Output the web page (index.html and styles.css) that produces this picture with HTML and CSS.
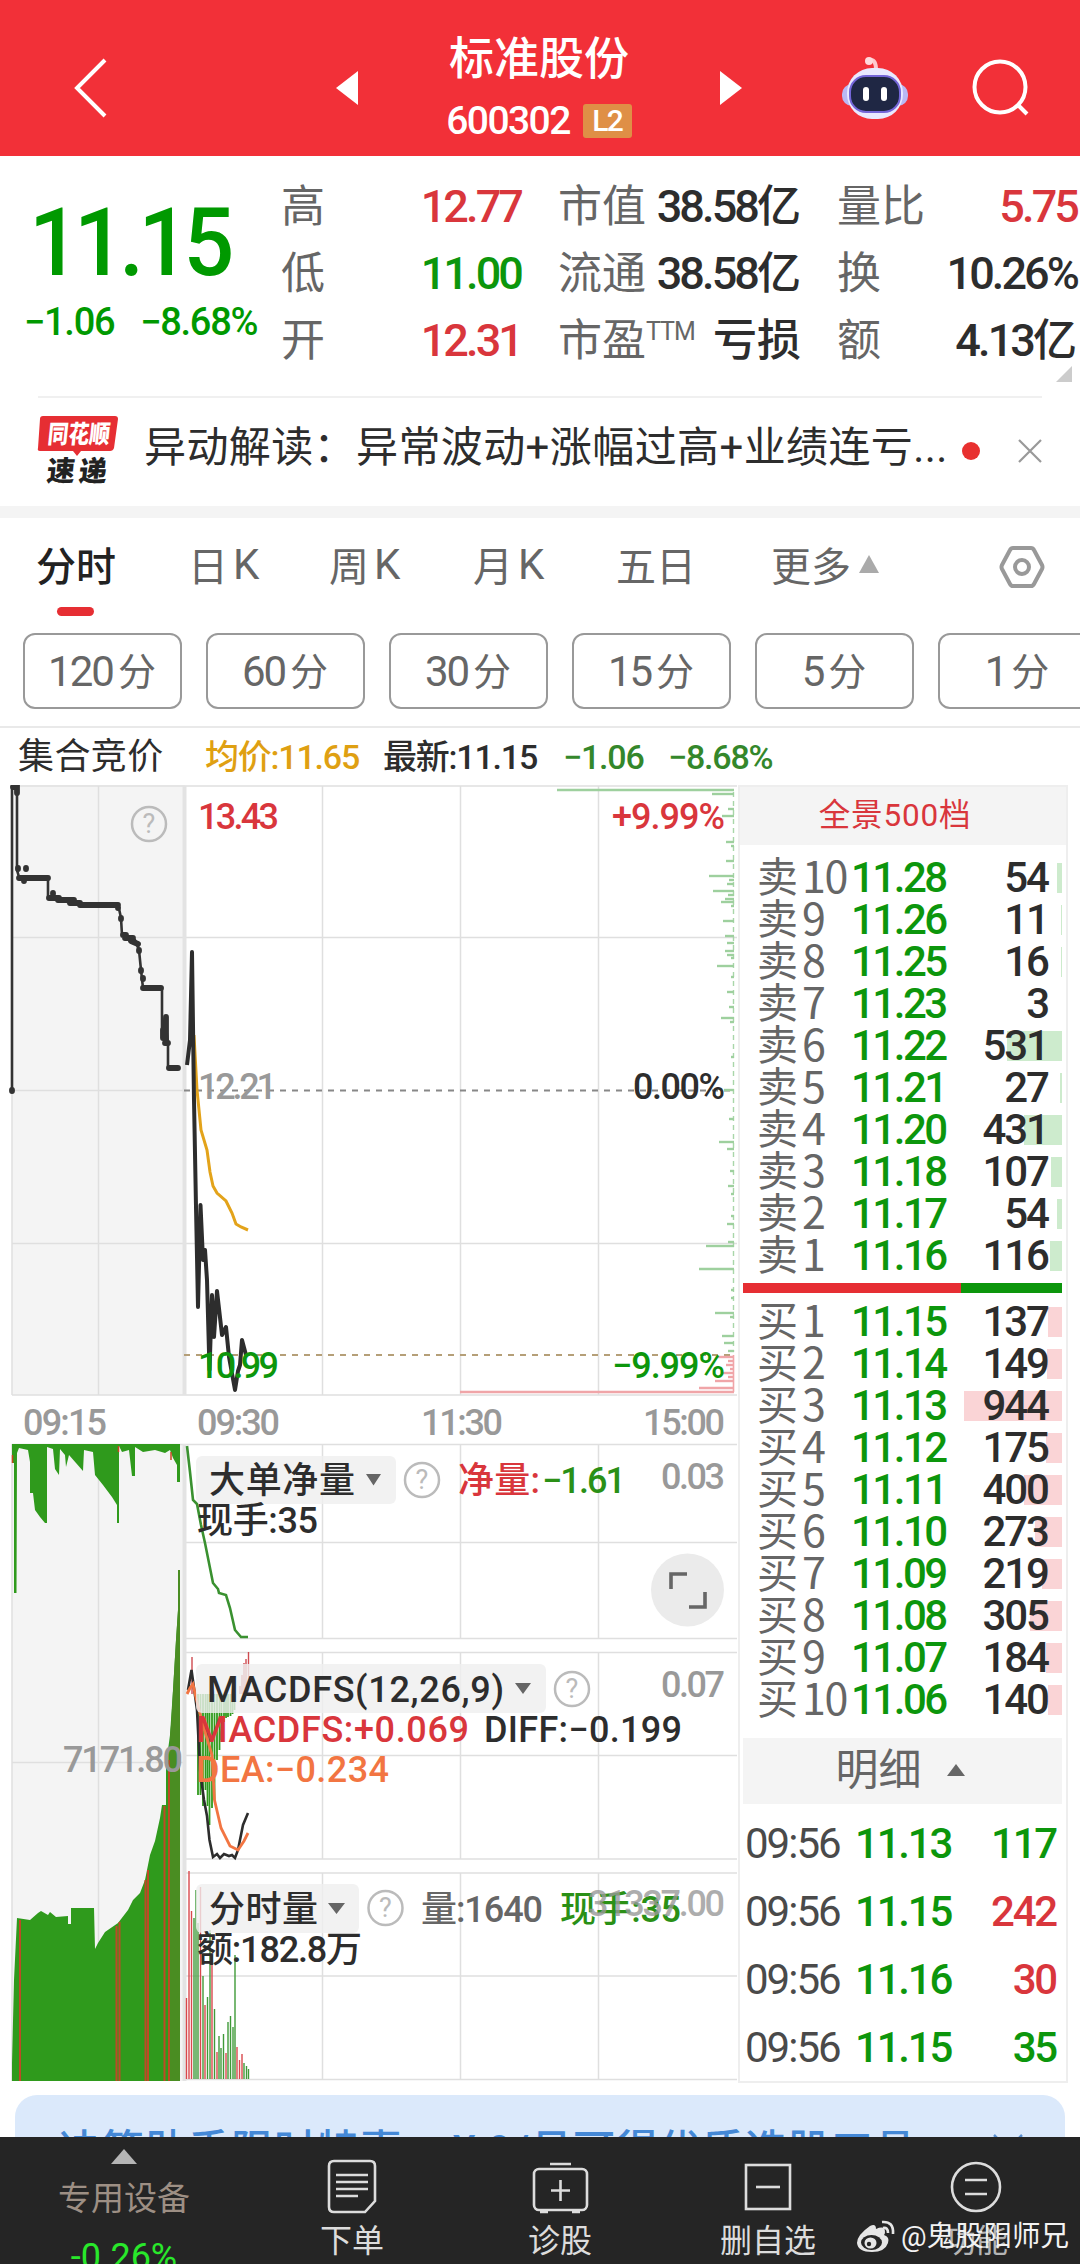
FILE: index.html
```html
<!DOCTYPE html>
<html lang="zh-CN">
<head>
    <meta charset="UTF-8">
    <meta name="viewport" content="width=device-width, initial-scale=1.0">
    <title>标准股份 600302</title>
    <link rel="stylesheet" href="styles.css">
</head>
<body>
    <header class="header">
        <svg class="icon-back" width="36" height="62" viewBox="0 0 36 62"><path d="M32 3 L4 31 L32 59"/></svg>
        <svg class="icon-prev" width="22" height="34" viewBox="0 0 22 34"><path d="M22 0 V34 L0 17Z"/></svg>
        <div class="stock">
            <div class="stock-name">标准股份</div>
            <div class="stock-code"><span>600302</span><span class="badge">L2</span></div>
        </div>
        <svg class="icon-next" width="22" height="34" viewBox="0 0 22 34"><path d="M0 0 V34 L22 17Z"/></svg>
        <svg class="icon-robot" width="70" height="64" viewBox="0 0 70 64">
            <path d="M30 4 Q36 3 36 14" fill="none" stroke="#ffc9cf" stroke-width="4"/>
            <circle cx="29" cy="5" r="4" fill="#ffd9dc"/>
            <rect x="2" y="28" width="66" height="22" rx="10" fill="#b9b8f5"/>
            <rect x="7" y="12" width="56" height="51" rx="25" fill="#e9e9ff"/>
            <rect x="10" y="20" width="50" height="36" rx="16" fill="#1f2744" stroke="#7466d8" stroke-width="2"/>
            <rect x="23" y="31" width="6" height="14" rx="3" fill="#fff"/>
            <rect x="41" y="31" width="6" height="14" rx="3" fill="#fff"/>
        </svg>
        <svg class="icon-search" width="60" height="60" viewBox="0 0 60 60"><circle cx="28" cy="29" r="25.5"/><path d="M46 47 L55 56"/></svg>
    </header>

    <section class="quote">
        <div class="price-box">
            <div class="price">11.15</div>
            <div class="change"><span>−1.06</span><span>−8.68%</span></div>
        </div>
        <div class="stat s1"><label>高</label><b class="red">12.77</b></div>
        <div class="stat s2"><label>市值</label><b>38.58<i>亿</i></b></div>
        <div class="stat s3"><label>量比</label><b class="red">5.75</b></div>
        <div class="stat s1"><label>低</label><b class="green">11.00</b></div>
        <div class="stat s2"><label>流通</label><b>38.58<i>亿</i></b></div>
        <div class="stat s3"><label>换</label><b>10.26%</b></div>
        <div class="stat s1"><label>开</label><b class="red">12.31</b></div>
        <div class="stat s2"><label>市盈<sup>TTM</sup></label><b><i>亏损</i></b></div>
        <div class="stat s3"><label>额</label><b>4.13<i>亿</i></b></div>
        <svg class="corner" width="16" height="16" viewBox="0 0 16 16"><path d="M16 0 V16 H0Z" fill="#ccc"/></svg>
    </section>

    <section class="notice">
        <svg class="logo" width="84" height="72" viewBox="0 0 84 72">
            <path d="M7 1 H79 Q82 1 82 4 L78 33 Q77 36 74 36 H45 L41 41 L37 36 H4 Q1 36 2 33 L4 4 Q4 1 7 1Z" fill="#e62e33"/>
            <text x="14" y="28" textLength="62" lengthAdjust="spacingAndGlyphs" transform="skewX(-6)" fill="#fff" font-size="25" font-weight="900">同花顺</text>
            <text x="17" y="66" textLength="60" transform="skewX(-6)" fill="#222" font-size="28" font-weight="900">速递</text>
        </svg>
        <div class="notice-text">异动解读：异常波动+涨幅过高+业绩连亏...</div>
        <span class="dot"></span>
        <svg width="24" height="24" viewBox="0 0 24 24"><path d="M1 1 L23 23 M23 1 L1 23" stroke="#999" stroke-width="2.2"/></svg>
    </section>

    <nav class="tabs">
        <span class="active">分时</span>
        <span>日<em>K</em></span>
        <span>周<em>K</em></span>
        <span>月<em>K</em></span>
        <span>五日</span>
        <span>更多<svg width="20" height="18" viewBox="0 0 20 18"><path d="M10 0 L20 18 H0Z" fill="#aaa"/></svg></span>
        <svg class="gear" width="46" height="44" viewBox="0 0 46 44">
            <path d="M14 3 H32 Q34 3 35 5 L43 20 Q44 22 43 24 L35 39 Q34 41 32 41 H14 Q12 41 11 39 L3 24 Q2 22 3 20 L11 5 Q12 3 14 3Z"/>
            <circle cx="23" cy="22" r="7"/>
        </svg>
    </nav>

    <div class="periods">
        <span>120<i>分</i></span><span>60<i>分</i></span><span>30<i>分</i></span><span>15<i>分</i></span><span>5<i>分</i></span><span class="last">1<i>分</i></span>
    </div>

    <div class="info">
        <span class="i-name">集合竞价</span>
        <span class="i-avg">均价:11.65</span>
        <span class="i-last">最新:11.15</span>
        <span class="i-chg">−1.06</span>
        <span class="i-pct">−8.68%</span>
    </div>

    <main class="main">
        <svg class="chart" width="738" height="1310" viewBox="0 785 738 1310">
            <!-- call auction background -->
            <rect x="12" y="785" width="173" height="610" fill="#f4f4f4"/>
            <rect x="12" y="1444" width="173" height="637" fill="#f4f4f4"/>

            <!-- grid -->
            <g class="grid">
                <path d="M12 786H737M12 937.5H737M12 1090.5H184M12 1243.5H737M12 1395H737"/>
                <path d="M12 786V1395M98.5 786V1395M322.5 786V1395M460.5 786V1395M598.5 786V1395"/>
                <path d="M12 1444.5H737M184 1542.5H737M184 1638.5H737M184 1652.5H737M184 1755.5H737M184 1859H737M184 1873H737M184 1976H737M184 2079.5H737M12 1762.5H184"/>
                <path d="M12 1444V2081M98.5 1444V2081"/>
                <path d="M322.5 1444V1638M460.5 1444V1638M598.5 1444V1638M322.5 1652V1859M460.5 1652V1859M598.5 1652V1859M322.5 1873V2079M460.5 1873V2079M598.5 1873V2079"/>
                <path class="thick" d="M184.5 786V1395M184.5 1444V2081"/>
            </g>
            <path d="M184 1090.5H734" stroke="#888" stroke-width="1.8" stroke-dasharray="6 6"/>
            <path d="M184 1355H734" stroke="#b59f78" stroke-width="2" stroke-dasharray="6 6"/>
            <path d="M733.5 792V1352" stroke="#a9d6a9" stroke-width="1.4" stroke-dasharray="5 4"/>
            <path d="M733.5 1355V1392" stroke="#f0a5a8" stroke-width="1.6"/>
            <g id="depth"></g>

            <!-- price -->
            <path class="auction-line" d="M12 1090V787H17V870L19 877H48V898H58L72 904H118L121 918L122 935L135 940L139 950L141 970L143 988H162V1038L165 1018L168 1043V1068H179"/>
            <path class="auction-dots" d="M13 787H17V793M18 868v1M26 868v1M19 878H48M24 880v1M49 898H59M53 893v1M58 900H74M70 903H80M80 905H118M118 907v1M121 918v1M123 935H126M125 938H133M131 941L138 944M139 950v1M141 970v1M143 978v1M143 988H161M166 1017V1042M163 1030V1038M165 1043H168M169 1068H178M12 1090v1"/>
            <path d="M194 1035L197 1090L201 1130L207 1150L210 1172L213 1186L217 1193L226 1201L232 1213L236 1224L241 1227L248 1230" fill="none" stroke="#e3a31a" stroke-width="3"/>
            <path d="M187 1065L190 1040L192 952L194 1100L196 1207L198 1307L200.500 1205L203 1260L205 1250L207 1280L209.500 1370L212 1295L214 1337L217 1291L222 1335L226 1327L229 1357L235 1390L238 1371L240 1365L242 1340L246 1355" fill="none" stroke="#2d2d2d" stroke-width="4" stroke-linejoin="round"/>

            <g class="help"><circle cx="149" cy="824" r="17"/><text x="149" y="833">?</text></g>
            <text class="t red" x="198" y="829" textLength="81">13.43</text>
            <text class="t red" x="612" y="829" textLength="113">+9.99%</text>
            <text class="t gray" x="198" y="1099" textLength="79">12.21</text>
            <text class="t dark" x="633" y="1099" textLength="92">0.00%</text>
            <text class="t green" x="198" y="1378" textLength="81">10.99</text>
            <text class="t green" x="612" y="1378" textLength="113">−9.99%</text>
            <text class="t gray" x="23" y="1435" textLength="84">09:15</text>
            <text class="t gray" x="197" y="1435" textLength="83">09:30</text>
            <text class="t gray" x="421" y="1435" textLength="82">11:30</text>
            <text class="t gray" x="643" y="1435" textLength="82">15:00</text>

            <!-- auction volume -->
            <path d="M12 1444V1463H14V1593H16.500L17 1453L19 1448L28 1450L30 1462V1493H33L35 1510L40 1517L45 1523H47V1447L53 1449L55 1469L59 1475L60 1449L65 1455L66 1467L69 1455L76 1463L83 1471L84 1450L93 1452L95 1475L103 1485L112 1497L117 1505V1523H119V1446L122 1452L129 1450L132 1476H135V1447L143 1452L155 1450L165 1453L170 1450L173 1458L177 1465V1482H180V1444Z" fill="#2f9a1c"/>
            <path d="M12.500 1455V1463M118.500 1446V1452M171 1452V1460" stroke="#c8451f" stroke-width="1.500"/>
            <path d="M12 2081V2063L14 1980L17 1918L30 1920L38 1913L41 1911L48 1915L50 1912L56 1917L68 1916V1924H71V1908H94L95 1949L98 1943L105 1932L118 1923L128 1910L133 1900L140 1893L145 1880L150 1855L155 1841L160 1818L162 1805H166V1765L170 1735L173 1690L176 1640L178 1610V1570H180V2081Z" fill="#2f9a1c"/>
            <path d="M171 1725L176 1640L178 1610V1570H180V2081H170V1735Z" fill="#4a8d22"/>
            <path d="M20 1920V2081M116.500 1926V2081M119.500 1922V2081M145.500 1880V2081M148 1870V2081M164.500 1806V2081M169 1760V2081" stroke="#bd4a26" stroke-width="2"/>
            <text class="t gray" x="63" y="1772" textLength="120">7171.80</text>

            <!-- net big orders -->
            <path d="M187 1446L190 1472L193 1500L197 1504L201 1525L205 1543L213 1583L218 1589L219 1593L226 1595L230 1608L235 1630L241 1637H248" fill="none" stroke="#3a9130" stroke-width="2.600"/>

            <!-- macd -->
            <g id="macd"></g>
            <path d="M188 1690L191.500 1670L194 1688L197 1710L200 1770L204 1800L207 1816L209.500 1840L213 1857L217 1854L220 1858L224 1854L229 1856L232 1855L235 1858L238 1850L243 1825L248 1813" fill="none" stroke="#2d2d2d" stroke-width="2.600"/>
            <path d="M187 1694L190 1688L193 1684L196 1698L203 1725L212 1755L214.500 1800L221 1828L230 1846L238 1850L244 1841L248 1833" fill="none" stroke="#f27542" stroke-width="2.800"/>

            <!-- minute volume -->
            <g id="volume"></g>

            <g class="chip">
                <rect x="196" y="1456" width="200" height="48" rx="6"/>
                <rect x="196" y="1664" width="350" height="49" rx="6"/>
                <rect x="196" y="1884" width="163" height="49" rx="6"/>
            </g>
            <path d="M366 1474H381L373.500 1485.500ZM515 1683H531L523 1694ZM328 1903H345L336.500 1914Z" fill="#666"/>

            <text class="t dark" x="209" y="1493" textLength="146">大单净量</text>
            <g class="help"><circle cx="422" cy="1480" r="17"/><text x="422" y="1489">?</text></g>
            <text class="t red" x="458" y="1493" textLength="82">净量:</text>
            <text class="t green2" x="542" y="1493" textLength="84">−1.61</text>
            <text class="t gray" x="661" y="1489" textLength="64">0.03</text>
            <text class="t dark" x="197" y="1533" textLength="121">现手:35</text>

            <text class="t dark" x="207" y="1702" textLength="297">MACDFS(12,26,9)</text>
            <g class="help"><circle cx="572" cy="1689" r="17"/><text x="572" y="1698">?</text></g>
            <text class="t gray" x="661" y="1697" textLength="64">0.07</text>
            <text class="t red" x="196" y="1742" textLength="273">MACDFS:+0.069</text>
            <text class="t dark" x="484" y="1742" textLength="198">DIFF:−0.199</text>
            <text class="t orange" x="196" y="1782" textLength="193">DEA:−0.234</text>

            <text class="t dark" x="209" y="1922" textLength="109">分时量</text>
            <g class="help"><circle cx="385.5" cy="1908" r="17"/><text x="385.5" y="1917">?</text></g>
            <text class="t mid" x="421" y="1922" textLength="122">量:1640</text>
            <text class="t green2" x="560" y="1922" textLength="121">现手:35</text>
            <text class="t gray faded" x="588" y="1916" textLength="137">31337.00</text>
            <text class="t dark" x="197" y="1962" textLength="165">额:182.8万</text>

            <circle cx="687.500" cy="1590" r="36.500" fill="#ebebeb"/>
            <path d="M671 1589V1574H687M705 1592V1607H689" fill="none" stroke="#666" stroke-width="3.600"/>
        </svg>

        <aside class="book">
            <div class="book-title">全景500档</div>
            <div class="orders" id="sell"></div>
            <div class="ratio"><span></span></div>
            <div class="orders" id="buy"></div>
            <div class="detail-title">明细<svg width="18" height="12" viewBox="0 0 18 12"><path d="M9 0 L18 12 H0Z" fill="#666"/></svg></div>
            <div class="trades">
                <div><span>09:56</span><b>11.13</b><b class="qty">117</b></div>
                <div><span>09:56</span><b>11.15</b><b class="qty red">242</b></div>
                <div><span>09:56</span><b>11.16</b><b class="qty red">30</b></div>
                <div><span>09:56</span><b>11.15</b><b class="qty">35</b></div>
            </div>
        </aside>
    </main>

    <div class="banner"><span>决策助手限时特惠，</span><span class="offer">¥ 9/月可得优质选股工具</span><svg width="30" height="30" viewBox="0 0 30 30"><path d="M1 1 L29 29 M29 1 L1 29" stroke="#5a8fd0" stroke-width="2.5"/></svg></div>

    <footer class="bottom">
        <div class="sector">
            <svg width="26" height="15" viewBox="0 0 26 15"><path d="M13 0 L26 15 H0Z" fill="#b5b5b5"/></svg>
            <span>专用设备</span>
            <b>-0.26%</b>
        </div>
        <div class="item">
            <svg width="60" height="60" viewBox="0 0 60 60"><path d="M12 4H48Q53 4 53 9V44L43 55H12Q7 55 7 50V9Q7 4 12 4ZM14 18H46M14 25H46M14 32H46M14 39H36"/></svg>
            <span>下单</span>
        </div>
        <div class="item">
            <svg width="60" height="60" viewBox="0 0 60 60"><rect x="4" y="12" width="53" height="41" rx="5"/><path d="M20 7H41M30.500 23V44M21 33.500H40M10 55H18M42 55H50"/></svg>
            <span>诊股</span>
        </div>
        <div class="item">
            <svg width="60" height="60" viewBox="0 0 60 60"><rect x="8" y="8" width="44" height="44"/><path d="M18 30H42"/></svg>
            <span>删自选</span>
        </div>
        <div class="item">
            <svg width="60" height="60" viewBox="0 0 60 60"><circle cx="30" cy="30" r="24"/><path d="M19 23H41M19 37H41"/></svg>
            <span class="dim">功能</span>
        </div>
        <div class="watermark">
            <svg width="40" height="34" viewBox="0 0 40 34">
                <path d="M14 6Q20 3 20 9Q29 5 29 12Q29 14 28 15Q34 17 32 23Q29 32 16 32Q2 32 1 23Q1 15 14 6Z" fill="#e6e6e6"/>
                <ellipse cx="15.500" cy="22.500" rx="10.500" ry="7.500" fill="#252525"/>
                <ellipse cx="14.500" cy="23" rx="6" ry="5.500" fill="#e6e6e6"/>
                <circle cx="13" cy="24" r="2.200" fill="#252525"/>
                <path d="M26 2Q38 1 37 14M27 8Q32 7 32 13" fill="none" stroke="#e6e6e6" stroke-width="2.600"/>
            </svg>
            <span>@鬼股阳师兄</span>
        </div>
    </footer>
    <script src="script.js"></script>
</body>
</html>
```
FILE: styles.css
```css
* {
    box-sizing: border-box;
}
body {
    margin: 0;
    width: 1080px;
    height: 2264px;
    overflow: hidden;
    background: #fff;
    color: #2d2d2d;
    font-family: Roboto, "Noto Sans CJK SC", sans-serif;
    display: flex;
    flex-direction: column;
}
i, em {
    font-style: normal;
}
svg {
    display: block;
    flex: none;
}
.red { color: #d9363c; fill: #d9363c; }
.green { color: #0c960c; fill: #0c960c; }

/* header */
.header {
    flex: none;
    height: 156px;
    background: #f23038;
    color: #fff;
    display: flex;
    align-items: center;
    padding: 20px 48px 0 73px;
}
.icon-back, .icon-search {
    fill: none;
    stroke: #fff;
    stroke-width: 4;
}
.icon-prev, .icon-next {
    fill: #fff;
}
.icon-prev {
    margin-left: 227px;
}
.stock {
    width: 363px;
    text-align: center;
}
.stock-name {
    font-size: 45px;
    line-height: 54px;
    font-weight: 500;
}
.stock-code {
    display: flex;
    justify-content: center;
    align-items: center;
    gap: 13px;
    font-size: 39px;
    font-weight: 500;
    line-height: 44px;
    letter-spacing: -1.6px;
    margin-top: 12px;
}
.badge {
    background: #df8f46;
    font-size: 30px;
    line-height: 34px;
    width: 49px;
    border-radius: 3px;
}
.icon-robot {
    margin-left: 98px;
}
.icon-search {
    margin-left: 62px;
}

/* quote */
.quote {
    flex: none;
    height: 240px;
    margin: 0 0 0 26px;
    padding-top: 17px;
    display: grid;
    grid-template-columns: 255px 277px 279px 243px;
    grid-auto-rows: 67px;
    position: relative;
}
.price-box {
    grid-row: span 3;
    color: #009900;
}
.price {
    font-size: 95px;
    font-weight: 500;
    line-height: 100px;
    letter-spacing: -6px;
    margin: 20px 0 0 3px;
    transform: scaleX(.94);
    transform-origin: left;
}
.change {
    display: flex;
    gap: 26px;
    font-size: 38px;
    font-weight: 500;
    line-height: 44px;
    letter-spacing: -1.3px;
    margin: 7px 0 0 -2px;
    white-space: nowrap;
}
.stat {
    display: flex;
    justify-content: space-between;
    align-items: center;
    line-height: 66px;
}
.stat label {
    font-size: 44px;
    color: #666;
}
.stat b {
    font-size: 45px;
    font-weight: 500;
    letter-spacing: -2.9px;
    white-space: nowrap;
}
.stat b i {
    font-size: 44px;
    letter-spacing: 0;
    font-weight: 500;
}
.s1 { padding-right: 37px; }
.s2 { padding-right: 36px; }
.s3 { padding-right: 3px; }
.stat sup {
    font-size: 25px;
    line-height: 0;
    vertical-align: 16px;
    letter-spacing: -1px;
}
.corner {
    position: absolute;
    right: 8px;
    bottom: 14px;
}

/* notice */
.notice {
    flex: none;
    height: 110px;
    margin: 0 38px;
    padding-bottom: 2px;
    border-top: 2px solid #f0f0f0;
    display: flex;
    align-items: center;
}
.logo {
    margin: 0 24px 0 -2px;
}
.notice-text {
    font-size: 42px;
    line-height: 60px;
    white-space: nowrap;
    letter-spacing: 0.4px;
    width: 820px;
    margin-top: -6px;
}
.dot {
    width: 18px;
    height: 18px;
    border-radius: 50%;
    background: #e8302f;
    margin-right: 38px;
}

/* tabs */
.tabs {
    flex: none;
    height: 127px;
    border-top: 12px solid #f4f4f4;
    padding: 0 34px 17px 36px;
    display: grid;
    grid-template-columns: 152px 141px 144px 143px 155px 228px 46px;
    align-items: center;
    font-size: 40px;
    color: #666;
}
.tabs span {
    display: flex;
    align-items: center;
    gap: 8px;
    margin-top: -6px;
}
.tabs em {
    margin-left: -3px;
    font-size: 42px;
}
.tabs .active {
    color: #222;
    font-weight: 500;
    position: relative;
}
.tabs .active:after {
    content: "";
    position: absolute;
    left: 21px;
    bottom: -23px;
    width: 37px;
    height: 9px;
    border-radius: 5px;
    background: #e62e33;
}
.gear {
    fill: none;
    stroke: #999;
    stroke-width: 4;
}

/* periods */
.periods {
    flex: none;
    height: 95px;
    border-bottom: 2px solid #e9e9e9;
    padding-left: 23px;
    display: flex;
    gap: 24px;
}
.periods span {
    flex: none;
    width: 159px;
    height: 76px;
    border: 2px solid #999;
    border-radius: 12px;
    color: #666;
    font-size: 42px;
    letter-spacing: -2px;
    display: flex;
    align-items: center;
    justify-content: center;
    gap: 5px;
    padding-right: 3px;
}
.periods i {
    font-size: 38px;
    margin-top: -5px;
}

/* info line */
.info {
    flex: none;
    height: 57px;
    padding-left: 18px;
    display: grid;
    grid-template-columns: 187px 178px 180px 105px auto;
    align-items: center;
    font-size: 34px;
    font-weight: 500;
    line-height: 58px;
    letter-spacing: -1.2px;
    white-space: nowrap;
}
.i-name {
    font-size: 36px;
    letter-spacing: 0.4px;
    font-weight: 400;
}
.i-avg { color: #dfa012; }
.i-chg, .i-pct { color: #34872b; }

/* charts */
.main {
    flex: none;
    height: 1310px;
    display: flex;
    align-items: flex-start;
}
.grid path {
    fill: none;
    stroke: #dfdfdf;
    stroke-width: 1.5;
}
.grid .thick {
    stroke: #e3e3e3;
    stroke-width: 4;
}
.auction-line {
    fill: none;
    stroke: #333;
    stroke-width: 2.6;
}
.auction-dots {
    fill: none;
    stroke: #333;
    stroke-width: 5.8;
    stroke-linecap: round;
}
.t {
    font-size: 36px;
    font-weight: 500;
}
.t.gray { fill: #999; }
.t.mid { fill: #666; }
.t.dark { fill: #2d2d2d; }
.t.green2 { fill: #2a9016; }
.t.orange { fill: #f27542; }
.t.faded { opacity: .8; }
.help circle {
    fill: none;
    stroke: #bbb;
    stroke-width: 2.5;
}
.help text {
    fill: #bbb;
    font-size: 27px;
    text-anchor: middle;
}
.chip {
    fill: #efefef;
    fill-opacity: .8;
}

/* order book */
.book {
    width: 330px;
    height: 1298px;
    border: 2px solid #eee;
    display: flex;
    flex-direction: column;
}
.book-title {
    height: 59px;
    background: #f4f4f4;
    color: #d9363c;
    font-size: 31.5px;
    line-height: 57px;
    letter-spacing: 0.8px;
    text-align: center;
    padding-right: 16px;
}
.orders {
    margin: 12px 4px 0 3px;
    display: flex;
    flex-direction: column;
}
.order {
    position: relative;
    height: 42px;
    padding: 0 14px 0 14px;
    display: grid;
    grid-template-columns: 45px 49px 120px 1fr;
    align-items: center;
    font-size: 42px;
    line-height: 42px;
}
.order label {
    font-size: 41px;
    color: #666;
}
.order .level {
    color: #666;
    font-family: "Noto Sans CJK SC", sans-serif;
    font-size: 43px;
    letter-spacing: -1.4px;
    margin-top: -7px;
}
.order b {
    position: relative;
    font-weight: 500;
    color: #0c960c;
    letter-spacing: -2.5px;
}
.order .qty {
    color: #2d2d2d;
    text-align: right;
    letter-spacing: -2px;
}
.order .bar {
    position: absolute;
    right: 0;
    top: 6px;
    height: 30px;
    background: #cdebcd;
}
#buy .bar {
    background: #fad4d6;
}
.ratio {
    margin: 6px 4px 0 3px;
    height: 10px;
    background: #0c960c;
}
.ratio span {
    display: block;
    width: 218px;
    height: 10px;
    background: #e62e33;
}
#buy {
    margin-top: 8px;
}
.detail-title {
    margin: 17px 4px 0 3px;
    height: 68px;
    background: #f4f4f4;
    color: #666;
    font-size: 43px;
    line-height: 64px;
    display: flex;
    align-items: center;
    justify-content: center;
    gap: 25px;
    padding: 0 5px 2px 0;
}
.trades {
    padding: 5px 10px 0 5px;
}
.trades div {
    height: 68px;
    display: grid;
    grid-template-columns: 110px 110px 1fr;
    align-items: center;
    font-size: 42px;
    letter-spacing: -2.2px;
}
.trades span {
    color: #4a4a4a;
    letter-spacing: -2px;
}
.trades b {
    font-weight: 500;
    color: #0c960c;
}
.trades .qty {
    text-align: right;
}
.trades .red {
    color: #d9363c;
}

/* banner */
.banner {
    flex: none;
    height: 42px;
    margin: 0 15px;
    padding: 31px 0 0 44px;
    border-radius: 22px 22px 0 0;
    background: #dbe9fb;
    color: #4488d6;
    overflow: hidden;
    display: flex;
    font-size: 42px;
    font-weight: 500;
    letter-spacing: 1px;
    line-height: 50px;
    white-space: nowrap;
}
.banner .offer {
    width: 510px;
    margin-left: 7px;
    margin-right: 30px;
}
.banner svg {
    margin-top: 8px;
}

/* bottom bar */
.bottom {
    flex: none;
    position: relative;
    height: 127px;
    background: #252525;
    color: #dcdcdc;
    display: grid;
    grid-template-columns: 248px 208px 208px 208px 208px;
}
.sector {
    display: flex;
    flex-direction: column;
    align-items: center;
    padding-top: 12px;
    overflow: hidden;
    height: 127px;
}
.sector span {
    color: #9d8f84;
    font-size: 33px;
    line-height: 40px;
    margin-top: 15px;
}
.sector b {
    color: #29e82b;
    font-size: 36px;
    font-weight: 400;
    line-height: 40px;
    margin-top: 18px;
}
.item {
    display: flex;
    flex-direction: column;
    align-items: center;
    padding-top: 20px;
}
.item svg {
    fill: none;
    stroke: #dcdcdc;
    stroke-width: 2.6;
}
.item span {
    font-size: 32px;
    line-height: 40px;
    margin-top: 4px;
}
.item .dim {
    color: #b4b4b4;
}
.watermark {
    position: absolute;
    right: 11px;
    bottom: 7px;
    display: flex;
    align-items: center;
    gap: 5px;
    color: #f2f2f2;
    font-size: 28.5px;
    line-height: 40px;
}
```
FILE: script.js
```javascript
const sell = [
    [10, "11.28", 54, 5], [9, "11.26", 11, 1], [8, "11.25", 16, 1], [7, "11.23", 3, 0], [6, "11.22", 531, 55],
    [5, "11.21", 27, 2], [4, "11.20", 431, 38], [3, "11.18", 107, 11], [2, "11.17", 54, 5], [1, "11.16", 116, 12]
];
const buy = [
    [1, "11.15", 137, 14], [2, "11.14", 149, 15], [3, "11.13", 944, 98], [4, "11.12", 175, 16], [5, "11.11", 400, 38],
    [6, "11.10", 273, 27], [7, "11.09", 219, 20], [8, "11.08", 305, 32], [9, "11.07", 184, 16], [10, "11.06", 140, 14]
];

function renderOrders(id, side, rows) {
    document.getElementById(id).innerHTML = rows.map(([level, price, qty, bar]) =>
        `<div class="order"><span class="bar" style="width:${bar}px"></span><label>${side}</label><span class="level">${level}</span><b>${price}</b><b class="qty">${qty}</b></div>`
    ).join("");
}

function lines(id, items) {
    document.getElementById(id).innerHTML = items.map(([d, color, width]) =>
        `<path d="${d}" stroke="${color}" stroke-width="${width}" fill="none"/>`
    ).join("");
}

renderOrders("sell", "卖", sell);
renderOrders("buy", "买", buy);

// price distribution at the right edge: [y, left x]
const up = [[790, 557], [794, 712], [809, 728], [816, 722], [842, 726], [846, 731], [861, 726], [876, 709], [880, 729], [884, 727], [891, 713],
    [895, 728], [899, 725], [902, 721], [906, 731], [921, 723], [936, 725], [943, 727], [951, 725], [955, 727], [958, 731], [966, 717], [977, 731],
    [992, 727], [1007, 729], [1018, 721], [1022, 730], [1057, 731], [1090, 724], [1119, 729], [1142, 719], [1149, 727], [1171, 730], [1186, 728],
    [1194, 731], [1216, 731], [1224, 727], [1242, 728], [1246, 706], [1269, 699], [1290, 731], [1298, 731], [1313, 715], [1317, 730], [1336, 722],
    [1343, 724], [1351, 728]];
const down = [[1357, 716], [1361, 728], [1365, 726], [1369, 730], [1373, 722], [1377, 728], [1381, 715], [1388, 699], [1392, 460]];
lines("depth", [
    ...up.map(([y, x]) => [`M${x} ${y}H734`, "#9ed09e", 2.4]),
    ...down.map(([y, x]) => [`M${x} ${y}H734`, "#f0a5a8", 2.4])
]);

const macd = [[198, 1795], [200.5, 1795], [203, 1806], [205.5, 1790], [207.5, 1806], [209.5, 1825], [212, 1808], [214.5, 1800], [217, 1760],
    [219.5, 1750], [221.5, 1740], [224, 1722], [226, 1718], [228, 1717], [230.5, 1716], [232.5, 1714], [234.5, 1710]];
const macdUp = [[192, 1657], [240, 1686], [242, 1675], [244, 1663], [246, 1659], [248.5, 1652]];
lines("macd", [
    ...macd.map(([x, y]) => [`M${x} 1694V${y}`, "#2f9a1c", 1.8]),
    ...macdUp.map(([x, y]) => [`M${x} 1694V${y}`, "#cf4a4f", 1.4])
]);

const volume = [[186.5, 1998, 1], [189, 1871, 1], [191.5, 1911, 1], [194, 1918, 0], [196, 1890, 0], [198, 1923, 0], [200.5, 1887, 1], [203, 1976, 0],
    [205, 2005, 1], [207.5, 1997, 0], [210, 1930, 0], [212, 1955, 1], [214.5, 2009, 0], [217, 2052, 1], [219, 2036, 0], [221, 2048, 0],
    [223.5, 2034, 0], [226, 2053, 1], [228, 2022, 0], [230.5, 2016, 0], [233, 2027, 0], [235, 1955, 0], [237, 2047, 1], [239.5, 2060, 1],
    [242, 2054, 1], [244, 2063, 0], [246.5, 2066, 0], [248.5, 2069, 0]];
lines("volume", volume.map(([x, y, red]) => [`M${x} 2079V${y}`, red ? "#d9484c" : "#3f9a38", 1.4]));
```
